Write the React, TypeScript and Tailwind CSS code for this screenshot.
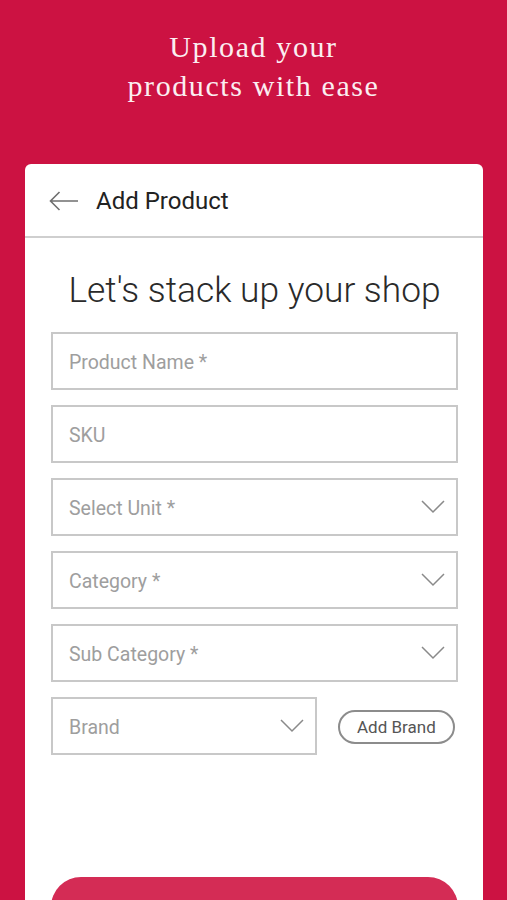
const fields = [
  { label: "Product Name *", select: false },
  { label: "SKU", select: false },
  { label: "Select Unit *", select: true },
  { label: "Category *", select: true },
  { label: "Sub Category *", select: true },
];

function Chevron() {
  return (
    <svg viewBox="0 0 24 14" className="h-[14px] w-[24px]" fill="none" stroke="#8a8a8a" strokeWidth="1.5">
      <path d="M1 1l11 11L23 1" />
    </svg>
  );
}

function Field({ label, select }: { label: string; select: boolean }) {
  return (
    <div className="flex h-[58px] items-center justify-between border-2 border-[#c8c8c8] pl-[16px] pr-[11px]">
      <span className="pt-[3px] text-[19.5px] text-[#9e9e9e]">{label}</span>
      {select && <Chevron />}
    </div>
  );
}

export default function App() {
  return (
    <div className="h-[900px] w-[507px] overflow-hidden bg-[#cc1242] font-['Roboto',sans-serif]">
      <h1 className="pt-[27px] text-center font-['Liberation_Serif',serif] text-[30px] leading-[39px] tracking-[1.6px] text-[#fbeef1]">
        Upload your
        <br />
        products with ease
      </h1>

      <div className="mt-[59px] ml-[25px] h-[800px] w-[458px] rounded-[6px] bg-white">
        <div className="flex h-[74px] items-center gap-[17px] border-b-2 border-[#cfcfcf] pt-[2px] pl-[24px] pr-[22px]">
          <svg viewBox="0 0 30 20" className="h-[20px] w-[30px]" fill="none" stroke="#6f6f6f" strokeWidth="1.6">
            <path d="M29 10H1.5M10.5 1L1.5 10l9 9" />
          </svg>
          <span className="text-[24px] text-[#222]">Add Product</span>
        </div>

        <div className="pl-[26px] pr-[25px]">
          <h2 className="mt-[26px] mb-[15px] text-center text-[35.3px] font-light text-[#2a2a2a]">
            Let's stack up your shop
          </h2>
          <div className="flex flex-col gap-[15px]">
            {fields.map((f) => (
              <Field key={f.label} {...f} />
            ))}
            <div className="flex items-center gap-[21px]">
              <div className="w-[266px]">
                <Field label="Brand" select />
              </div>
              <button className="h-[34px] translate-y-[1px] rounded-full border-2 border-[#8c8c8c] px-[17px] pt-[1px] text-[17px] text-[#555]">
                Add Brand
              </button>
            </div>
          </div>
          <div className="mt-[122px] h-[60px] rounded-[30px] bg-[#d42c55]" />
        </div>
      </div>
    </div>
  );
}
